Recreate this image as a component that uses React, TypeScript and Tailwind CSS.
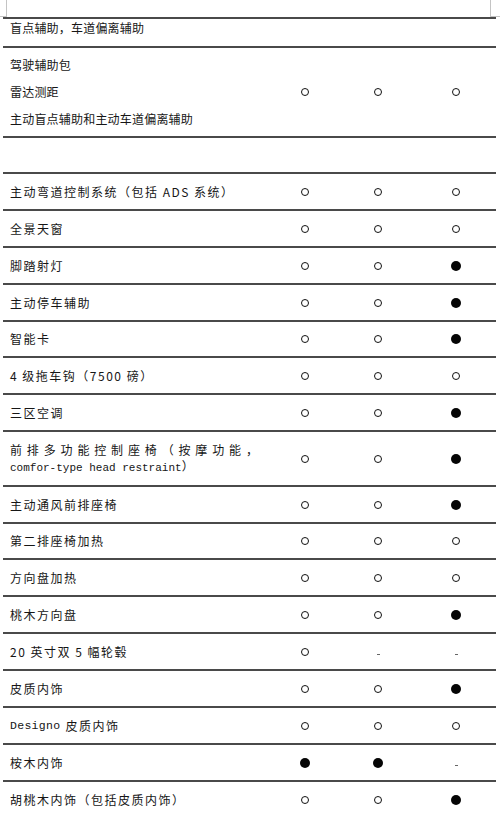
import React from "react";

type Sym = "o" | "f" | "-" | "";

type Row = {
  h: string;
  label?: React.ReactNode;
  syms: Sym[];
};

const mono = "font-['Liberation_Mono',monospace]";

const rows: Row[] = [
  { h: "h-[37px]", label: "主动弯道控制系统（包括 ADS 系统）", syms: ["o", "o", "o"] },
  { h: "h-[37px]", label: "全景天窗", syms: ["o", "o", "o"] },
  { h: "h-[37px]", label: "脚踏射灯", syms: ["o", "o", "f"] },
  { h: "h-[37px]", label: "主动停车辅助", syms: ["o", "o", "f"] },
  { h: "h-[36px]", label: "智能卡", syms: ["o", "o", "f"] },
  { h: "h-[37px]", label: "4 级拖车钩（7500 磅）", syms: ["o", "o", "o"] },
  { h: "h-[37px]", label: "三区空调", syms: ["o", "o", "f"] },
];

const rows2: Row[] = [
  { h: "h-[37px]", label: "主动通风前排座椅", syms: ["o", "o", "f"] },
  { h: "h-[36px]", label: "第二排座椅加热", syms: ["o", "o", "o"] },
  { h: "h-[37px]", label: "方向盘加热", syms: ["o", "o", "o"] },
  { h: "h-[37px]", label: "桃木方向盘", syms: ["o", "o", "f"] },
  { h: "h-[37px]", label: "20 英寸双 5 幅轮毂", syms: ["o", "-", "-"] },
  { h: "h-[37px]", label: "皮质内饰", syms: ["o", "o", "f"] },
  {
    h: "h-[37px]",
    label: (
      <>
        <span className={mono + " tracking-[0.3px] text-[11.5px] mr-[5px]"}>Designo</span>
        <span>皮质内饰</span>
      </>
    ),
    syms: ["o", "o", "o"],
  },
  { h: "h-[37px]", label: "桉木内饰", syms: ["f", "f", "-"] },
  { h: "h-[37px]", label: "胡桃木内饰（包括皮质内饰）", syms: ["o", "o", "f"] },
];

function Symbol({ s }: { s: Sym }) {
  if (s === "o")
    return <span className="block w-[8px] h-[8px] rounded-full border border-[#111]" />;
  if (s === "f") return <span className="block w-[10px] h-[10px] rounded-full bg-[#050505]" />;
  if (s === "-") return <span className="block w-[3px] h-[1px] bg-[#666] translate-y-[3px]" />;
  return null;
}

const grid = "grid grid-cols-[267px_70px_76px_80px] border-t-2 border-[#4a4a4a]";

function SymCells({ syms }: { syms: Sym[] }) {
  return (
    <>
      {syms.map((s, i) => (
        <div key={i} className="flex items-center justify-center">
          <Symbol s={s} />
        </div>
      ))}
    </>
  );
}

function StdRow({ r }: { r: Row }) {
  return (
    <div className={grid + " " + r.h}>
      <div className="flex items-center pl-[7px] text-[12px] tracking-[1.5px] leading-[16px] whitespace-nowrap">
        {r.label}
      </div>
      <SymCells syms={r.syms} />
    </div>
  );
}

export default function App() {
  return (
    <div className="relative w-[500px] h-[814px] bg-white overflow-hidden text-[#161616] font-['Noto_Sans_CJK_SC','Noto_Sans',sans-serif]">
      {/* page corner marks */}
      <div className="absolute left-[6px] top-0 w-px h-[16px] bg-[#c4c4c4]" />
      <div className="absolute left-0 top-[16px] w-[7px] h-px bg-[#c4c4c4]" />
      <div className="absolute left-[490px] top-0 w-px h-[16px] bg-[#c4c4c4]" />
      <div className="absolute left-[490px] top-[16px] w-[10px] h-px bg-[#c4c4c4]" />

      <div className="h-[17px]" />
      <div className="ml-[3px] w-[493px]">
        {/* first row */}
        <div className={grid + " h-[29px]"}>
          <div className="pl-[7px] pt-[1px] text-[12px] tracking-[0.2px] leading-[16px] whitespace-nowrap">
            盲点辅助，车道偏离辅助
          </div>
          <SymCells syms={["", "", ""]} />
        </div>

        {/* driving assist package */}
        <div className={grid + " h-[90px]"}>
          <div className="pl-[7px] pt-[3px] text-[12px] tracking-[0.2px] leading-[27px] whitespace-nowrap flex flex-col">
            <span>驾驶辅助包</span>
            <span>雷达测距</span>
            <span>主动盲点辅助和主动车道偏离辅助</span>
          </div>
          <SymCells syms={["o", "o", "o"]} />
        </div>

        {/* empty row */}
        <div className={grid + " h-[36px]"}>
          <div />
          <SymCells syms={["", "", ""]} />
        </div>

        {rows.map((r, i) => (
          <StdRow key={i} r={r} />
        ))}

        {/* two-line row */}
        <div className={grid + " h-[55px]"}>
          <div className="flex flex-col justify-center pl-[7px] text-[12px] leading-[16px] whitespace-nowrap">
            <span className="tracking-[4.85px]">前排多功能控制座椅（按摩功能，</span>
            <span>
              <span className={mono + " text-[11px]"}>comfor-type head restraint</span>）
            </span>
          </div>
          <SymCells syms={["o", "o", "f"]} />
        </div>

        {rows2.map((r, i) => (
          <StdRow key={i} r={r} />
        ))}
      </div>
    </div>
  );
}
